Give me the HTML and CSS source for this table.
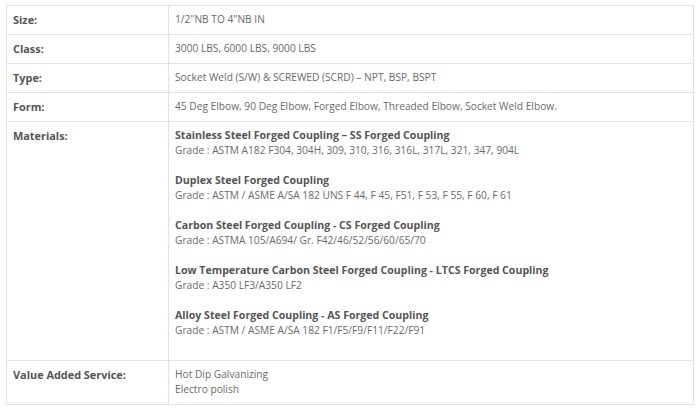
FILE: index.html
```html
<!DOCTYPE html>
<html>
<head>
<meta charset="utf-8">
<link rel="stylesheet" href="styles.css">
</head>
<body>
<table class="spec">
  <tr><th>Size:</th><td>1/2"NB TO 4"NB IN</td></tr>
  <tr><th>Class:</th><td>3000 LBS, 6000 LBS, 9000 LBS</td></tr>
  <tr><th>Type:</th><td>Socket Weld (S/W) &amp; SCREWED (SCRD) – NPT, BSP, BSPT</td></tr>
  <tr><th>Form:</th><td>45 Deg Elbow, 90 Deg Elbow, Forged Elbow, Threaded Elbow, Socket Weld Elbow.</td></tr>
  <tr><th>Materials:</th><td>
    <p><strong>Stainless Steel Forged Coupling – SS Forged Coupling</strong><br>Grade : ASTM A182 F304, 304H, 309, 310, 316, 316L, 317L, 321, 347, 904L</p>
    <p><strong>Duplex Steel Forged Coupling</strong><br>Grade : ASTM / ASME A/SA 182 UNS F 44, F 45, F51, F 53, F 55, F 60, F 61</p>
    <p><strong>Carbon Steel Forged Coupling - CS Forged Coupling</strong><br>Grade : ASTMA 105/A694/ Gr. F42/46/52/56/60/65/70</p>
    <p><strong>Low Temperature Carbon Steel Forged Coupling - LTCS Forged Coupling</strong><br>Grade : A350 LF3/A350 LF2</p>
    <p><strong>Alloy Steel Forged Coupling - AS Forged Coupling</strong><br>Grade : ASTM / ASME A/SA 182 F1/F5/F9/F11/F22/F91</p>
  </td></tr>
  <tr><th>Value Added Service:</th><td>Hot Dip Galvanizing<br>Electro polish</td></tr>
</table>
</body>
</html>
```
FILE: styles.css
```css
html, body { margin: 0; padding: 0; background: #fff; }
body { padding: 5px 6px; font-family: "Open Sans", "DejaVu Sans", sans-serif; font-size: 10.2px; color: #6a6a6a; }
.spec { border-collapse: collapse; width: 688px; }
.spec th, .spec td { border: 1px solid #e2e2e2; padding: 6px 6px 7px; line-height: 15px; text-align: left; vertical-align: top; }
.spec th { width: 149px; font-weight: 700; font-size: 10.9px; color: #555; }
.spec td { font-weight: 400; }
.spec td p { margin: 0 0 15px; }
.spec strong { color: #555; font-weight: 700; font-size: 10.6px; }
```
